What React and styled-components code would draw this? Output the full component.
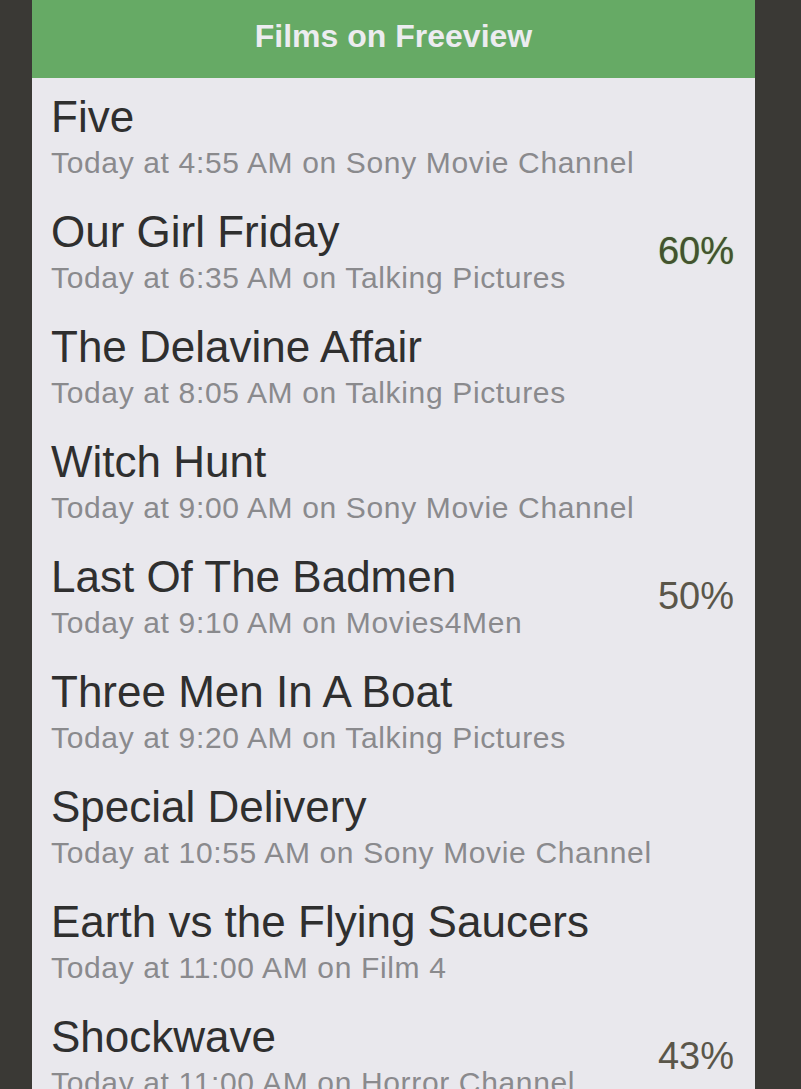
import React from "react";
import styled, { createGlobalStyle } from "styled-components";

const GlobalStyle = createGlobalStyle`
  html, body {
    margin: 0;
    padding: 0;
    background: #3a3935;
    font-family: "Liberation Sans", Arial, sans-serif;
  }
`;

const Page = styled.div`
  display: flex;
  height: 100vh;
  overflow: hidden;
  padding-left: 32px;
`;

const Panel = styled.div`
  width: 723px;
  background: #e9e8ed;
  display: flex;
  flex-direction: column;
`;

const Header = styled.div`
  height: 78px;
  flex-shrink: 0;
  background: #66aa65;
  display: flex;
  align-items: center;
  justify-content: center;
  padding-bottom: 6px;
  box-sizing: border-box;
  color: #ececf0;
  font-size: 32px;
  font-weight: bold;
`;

const Row = styled.div`
  display: flex;
  align-items: center;
  height: 115px;
  box-sizing: border-box;
  padding: 12px 21px 10px 19px;
  flex-shrink: 0;
`;

const Info = styled.div`
  flex: 1;
  min-width: 0;
`;

const Title = styled.div`
  font-size: 44px;
  line-height: 53px;
  color: #2f2f2f;
  white-space: nowrap;
`;

const Sub = styled.div`
  font-size: 30px;
  line-height: 40px;
  letter-spacing: 0.65px;
  color: #8a8a8d;
  white-space: nowrap;
`;

const Score = styled.div`
  font-size: 38px;
  color: ${(p) => (p.$good ? "#44522f" : "#5a564a")};
  text-shadow: ${(p) => (p.$good ? "0 0 1px #6aa85a" : "none")};
`;

const films = [
  ["Five", "Today at 4:55 AM on Sony Movie Channel"],
  ["Our Girl Friday", "Today at 6:35 AM on Talking Pictures", "60%", true],
  ["The Delavine Affair", "Today at 8:05 AM on Talking Pictures"],
  ["Witch Hunt", "Today at 9:00 AM on Sony Movie Channel"],
  ["Last Of The Badmen", "Today at 9:10 AM on Movies4Men", "50%"],
  ["Three Men In A Boat", "Today at 9:20 AM on Talking Pictures"],
  ["Special Delivery", "Today at 10:55 AM on Sony Movie Channel"],
  ["Earth vs the Flying Saucers", "Today at 11:00 AM on Film 4"],
  ["Shockwave", "Today at 11:00 AM on Horror Channel", "43%"],
];

export default function App() {
  return (
    <>
      <GlobalStyle />
      <Page>
        <Panel>
          <Header>Films on Freeview</Header>
          {films.map(([title, sub, score, good]) => (
            <Row key={title}>
              <Info>
                <Title>{title}</Title>
                <Sub>{sub}</Sub>
              </Info>
              {score && <Score $good={good}>{score}</Score>}
            </Row>
          ))}
        </Panel>
      </Page>
    </>
  );
}
